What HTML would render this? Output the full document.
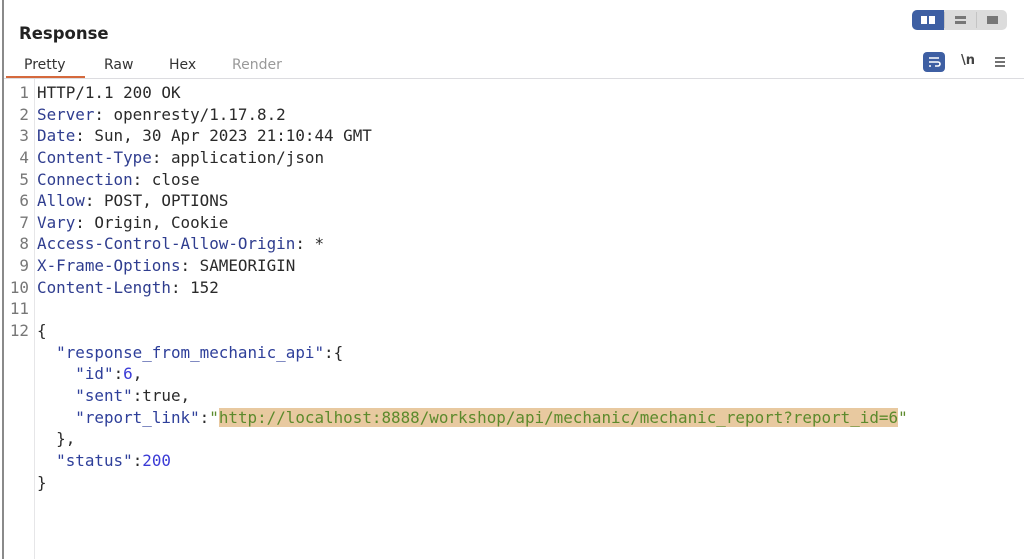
<!DOCTYPE html>
<html><head><meta charset="utf-8"><style>
html,body{margin:0;padding:0;background:#fff;width:1024px;height:559px;overflow:hidden;position:relative;font-family:"DejaVu Sans","Liberation Sans",sans-serif}
.lb{position:absolute;left:2px;top:0;width:2px;height:559px;background:#8a8a8a}
.title{position:absolute;left:19px;top:24px;font-size:16.5px;font-weight:bold;color:#222}
.tab{position:absolute;top:57px;font-size:14px;color:#333}
.ul{position:absolute;left:6px;top:76px;width:79px;height:2px;background:#d5693d}
.sep{position:absolute;left:4px;right:0;top:78px;height:1px;background:#dcdce0}
.gut{position:absolute;left:34px;top:79px;width:1px;height:480px;background:#e6e6e8}
.code{position:absolute;left:0;top:82px;font-family:"DejaVu Sans Mono","Liberation Mono",monospace;font-size:15.9px;line-height:21.64px;color:#2a2a2a;white-space:pre}
.n{display:inline-block;width:29px;text-align:right;color:#777;margin-right:8px}
.k{color:#2f3d8f}.v{color:#2e3f9a}.num{color:#3b3bd6}
.s{color:#5c8a2c;background:#e8c9a0}
.seg{position:absolute;top:10px;left:912px;width:95px;height:20px;background:#dcdcdc;border-radius:5px}
</style></head><body>
<div class="lb"></div>
<div class="title">Response</div>
<div class="tab" style="left:24px">Pretty</div>
<div class="tab" style="left:104px">Raw</div>
<div class="tab" style="left:169px">Hex</div>
<div class="tab" style="left:232px;color:#999">Render</div>
<div class="ul"></div><div class="sep"></div><div class="gut"></div>
<div class="seg"></div>
<div style="position:absolute;left:912px;top:10px;width:32px;height:20px;background:#3e5fa3;border-radius:5px 0 0 5px"></div>
<div style="position:absolute;left:921px;top:16px;width:6px;height:8px;background:#fff"></div>
<div style="position:absolute;left:929px;top:16px;width:6px;height:8px;background:#fff"></div>
<div style="position:absolute;left:944px;top:12px;width:1px;height:16px;background:#c4c4c4"></div>
<div style="position:absolute;left:976px;top:12px;width:1px;height:16px;background:#c4c4c4"></div>
<div style="position:absolute;left:955px;top:16px;width:11px;height:3px;background:#777"></div>
<div style="position:absolute;left:955px;top:21px;width:11px;height:3px;background:#777"></div>
<div style="position:absolute;left:987px;top:16px;width:11px;height:8px;background:#777"></div>
<div style="position:absolute;left:923px;top:52px;width:22px;height:20px;background:#3e5fa3;border-radius:4px"></div>
<svg style="position:absolute;left:923px;top:52px" width="22" height="20"><path d="M6 6h10M6 10h9a2 2 0 0 1 0 4h-3M6 14h2" stroke="#fff" stroke-width="1.6" fill="none"/></svg>
<div style="position:absolute;left:961px;top:53px;font-size:13px;font-weight:bold;color:#444">\n</div>
<svg style="position:absolute;left:994px;top:56px" width="12" height="12"><path d="M1 2h10M1 6h10M1 10h10" stroke="#444" stroke-width="1.6"/></svg>
<div class="code"><span class="n">1</span>HTTP/1.1 200 OK
<span class="n">2</span><span class="k">Server</span>: openresty/1.17.8.2
<span class="n">3</span><span class="k">Date</span>: Sun, 30 Apr 2023 21:10:44 GMT
<span class="n">4</span><span class="k">Content-Type</span>: application/json
<span class="n">5</span><span class="k">Connection</span>: close
<span class="n">6</span><span class="k">Allow</span>: POST, OPTIONS
<span class="n">7</span><span class="k">Vary</span>: Origin, Cookie
<span class="n">8</span><span class="k">Access-Control-Allow-Origin</span>: *
<span class="n">9</span><span class="k">X-Frame-Options</span>: SAMEORIGIN
<span class="n">10</span><span class="k">Content-Length</span>: 152
<span class="n">11</span>
<span class="n">12</span>{
<span class="n"></span>  <span class="v">"response_from_mechanic_api"</span>:{
<span class="n"></span>    <span class="v">"id"</span>:<span class="num">6</span>,
<span class="n"></span>    <span class="v">"sent"</span>:true,
<span class="n"></span>    <span class="v">"report_link"</span>:<span style="color:#5c8a2c">"</span><span class="s">http://localhost:8888/workshop/api/mechanic/mechanic_report?report_id=6</span><span style="color:#5c8a2c">"</span>
<span class="n"></span>  },
<span class="n"></span>  <span class="v">"status"</span>:<span class="num">200</span>
<span class="n"></span>}</div>
</body></html>
